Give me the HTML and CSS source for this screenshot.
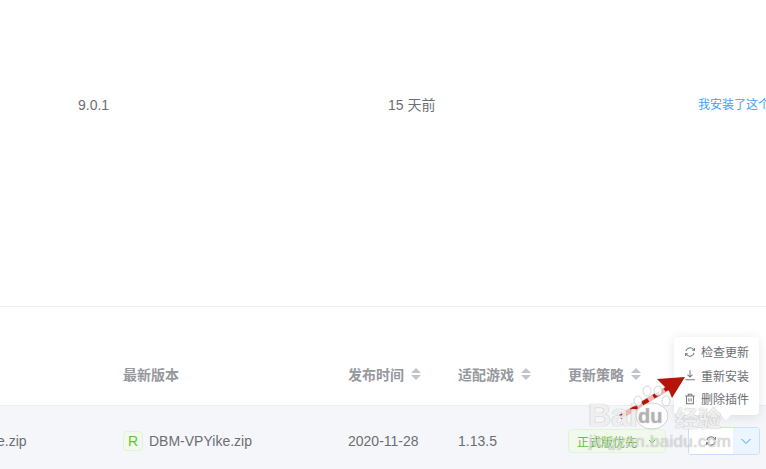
FILE: index.html
```html
<!DOCTYPE html>
<html lang="en">
<head>
  <meta charset="UTF-8">
  <title>插件管理</title>
  <link rel="stylesheet" href="styles.css">
</head>
<body>

  <div class="top-panel">
    <div class="plugin-row">
      <span>9.0.1</span>
      <span>15 天前</span>
      <a class="link" href="#">我安装了这个</a>
    </div>
  </div>

  <div class="table-head table-grid">
    <div></div>
    <div class="head-cell">最新版本</div>
    <div class="head-cell">发布时间 <i class="sort"></i></div>
    <div class="head-cell">适配游戏 <i class="sort"></i></div>
    <div class="head-cell">更新策略 <i class="sort"></i></div>
    <div></div>
  </div>

  <div class="table-row table-grid">
    <div class="file-cut">e.zip</div>
    <div class="file-cell"><span class="tag">R</span>DBM-VPYike.zip</div>
    <div>2020-11-28</div>
    <div>1.13.5</div>
    <div class="strategy">
      正式版优先
      <svg class="check" width="10" height="10" viewBox="0 0 10 10"><path d="M2 4l3 3 3-3" fill="none" stroke="#67c23a" stroke-width="1"/></svg>
    </div>
    <div class="btn-group">
      <button class="btn-main">
        <svg width="12" height="12" viewBox="0 0 14 14" fill="none" stroke="#77797e" stroke-width="1.2"><path d="M2.200 6a5 5 0 0 1 8.600-2.200L12 5M11.800 8a5 5 0 0 1-8.600 2.200L2 9"/><path d="M12.200 2.400V5H9.600M1.800 11.600V9h2.600"/></svg>
      </button>
      <button class="btn-more">
        <svg width="12" height="12" viewBox="0 0 12 12"><path d="M1.500 4l4.500 4.500L10.500 4" fill="none" stroke="#409eff" stroke-width="1"/></svg>
      </button>
    </div>
  </div>

  <!-- dropdown opened from the button group -->
  <div class="dropdown">
    <div class="drop-item">
      <svg width="12" height="12" viewBox="0 0 14 14" fill="none" stroke="#77797e" stroke-width="1.2"><path d="M2.200 6a5 5 0 0 1 8.600-2.200L12 5M11.800 8a5 5 0 0 1-8.600 2.200L2 9"/><path d="M12.200 2.400V5H9.600M1.800 11.600V9h2.600"/></svg>
      检查更新
    </div>
    <div class="drop-item">
      <svg width="12" height="12" viewBox="0 0 14 14" fill="none" stroke="#77797e" stroke-width="1.2"><path d="M7 1.500v7.500M4 6.500L7 9.500l3-3M1.500 12.500h11"/></svg>
      重新安装
    </div>
    <div class="drop-item">
      <svg width="12" height="12" viewBox="0 0 14 14" fill="none" stroke="#77797e" stroke-width="1.2"><path d="M1.500 3.500h11M5 3.500V1.500h4v2M3 3.500v9h8v-9M5.700 6v4M8.300 6v4"/></svg>
      删除插件
    </div>
    <i class="drop-caret"></i>
  </div>

  <svg class="arrow" width="766" height="469" viewBox="0 0 766 469">
    <path d="M620 417L668 388" stroke="#edb9b3" stroke-width="5" fill="none"/>
    <path d="M620 417L668 388" stroke="#b5140c" stroke-width="4" stroke-dasharray="7 6" fill="none"/>
    <path d="M685 377L657 379L664 386L669 391L672 398Z" fill="#b5140c"/>
  </svg>

  <div class="watermark">
    <svg class="paw" width="40" height="50" viewBox="0 0 40 50" fill="rgba(255,255,255,.85)" stroke="rgba(120,120,120,.3)">
      <ellipse cx="6" cy="18" rx="4" ry="5"/>
      <ellipse cx="15" cy="8" rx="4" ry="5"/>
      <ellipse cx="26" cy="8" rx="4" ry="5"/>
      <ellipse cx="34" cy="18" rx="4" ry="5"/>
      <ellipse cx="20" cy="33" rx="16" ry="13"/>
    </svg>
    <span class="wm-bai">Bai</span>
    <span class="wm-du">du</span>
    <span class="wm-jy">经验</span>
    <span class="wm-url">jingyan.baidu.com</span>
  </div>

</body>
</html>
```

FILE: styles.css
```css
body {
  font-family: 'Liberation Sans', 'Noto Sans CJK SC', sans-serif;
  font-size: 14px;
  background-color: white;
  color: #6c6e73;
  margin: 0;
  width: 766px;
  height: 469px;
  position: relative;
  overflow: hidden;
}

.top-panel {
  height: 306px;
  border-bottom: 1px solid #ebeef5;
}

.plugin-row {
  height: 210px;
  padding-left: 78px;
  display: grid;
  grid-template-columns: 310px 310px 68px;
  align-items: center;
  line-height: 16px;
  white-space: nowrap;
}

.link {
  color: #409eff;
  font-size: 12px;
  text-decoration: none;
}

.table-grid {
  display: grid;
  grid-template-columns: 123px 225px 110px 110px 120px 78px;
  align-items: center;
}

.table-head {
  height: 60px;
  padding-top: 37px;
  padding-bottom: 1px;
  border-bottom: 1px solid #ebeef5;
}

.head-cell {
  font-size: 14px;
  font-weight: bold;
  color: #96989d;
  display: flex;
  align-items: center;
  gap: 7px;
}

/* sort arrows, up and down */
.sort {
  width: 10px;
  height: 12px;
  position: relative;
}

.sort::before, .sort::after {
  content: "";
  position: absolute;
  left: 0;
  border-left: 5px solid transparent;
  border-right: 5px solid transparent;
}

.sort::before {
  top: 0;
  border-bottom: 5px solid #c0c4cc;
}

.sort::after {
  bottom: 0;
  border-top: 5px solid #c0c4cc;
}

.table-row {
  height: 70px;
  background-color: #f5f6fa;
  white-space: nowrap;
}

.file-cut {
  margin-left: -3px;
}

.file-cell {
  display: flex;
  align-items: center;
  gap: 6px;
}

.tag {
  width: 18px;
  height: 18px;
  line-height: 18px;
  text-align: center;
  background-color: #f0f9eb;
  border: 1px solid #e1f3d8;
  border-radius: 4px;
  color: #67c23a;
}

.strategy {
  width: 98px;
  height: 24px;
  box-sizing: border-box;
  padding: 0 8px;
  background-color: #f0f9eb;
  border: 1px solid #e1f3d8;
  border-radius: 4px;
  color: #67c23a;
  font-size: 12px;
  display: flex;
  align-items: center;
  justify-content: space-between;
}

.btn-group {
  width: 72px;
  height: 28px;
  box-sizing: border-box;
  display: flex;
  border: 1px solid #c6e2ff;
  border-radius: 3px;
  overflow: hidden;
}

.btn-group button {
  border: none;
  padding: 0;
  display: flex;
  align-items: center;
  justify-content: center;
}

.btn-main {
  width: 44px;
  background-color: white;
}

.btn-more {
  flex: 1;
  background-color: #ecf5ff;
}

.dropdown {
  position: absolute;
  left: 674px;
  top: 337px;
  width: 85px;
  height: 78px;
  box-sizing: border-box;
  padding-top: 3px;
  background-color: white;
  border-radius: 4px;
  box-shadow: 0 2px 12px rgba(0, 0, 0, 0.1);
  font-size: 12px;
}

.drop-item {
  height: 23.500px;
  padding-left: 10px;
  display: flex;
  align-items: center;
  gap: 5px;
  white-space: nowrap;
}

.drop-caret {
  position: absolute;
  left: 46px;
  bottom: -5px;
  border-left: 6px solid transparent;
  border-right: 6px solid transparent;
  border-top: 6px solid white;
}

.arrow {
  position: absolute;
  left: 0;
  top: 0;
}

.watermark {
  position: absolute;
  left: 586px;
  top: 380px;
  width: 150px;
  height: 80px;
  color: rgba(255, 255, 255, 0.85);
  text-shadow: 0 0 1px rgba(90, 90, 90, 0.6);
  white-space: nowrap;
}

.paw {
  position: absolute;
  left: 46px;
  top: 3px;
}

.wm-bai {
  position: absolute;
  left: 2px;
  top: 17px;
  font-size: 32px;
  font-weight: bold;
}

.wm-du {
  position: absolute;
  left: 52px;
  top: 25px;
  font-size: 20px;
  font-weight: bold;
  color: rgba(190, 190, 190, 0.6);
}

.wm-jy {
  position: absolute;
  left: 89px;
  top: 20px;
  font-size: 23px;
  font-weight: bold;
}

.wm-url {
  position: absolute;
  left: 3px;
  top: 52px;
  font-size: 17px;
  letter-spacing: 0.3px;
  color: rgba(255, 255, 255, 0.6);
}
```
